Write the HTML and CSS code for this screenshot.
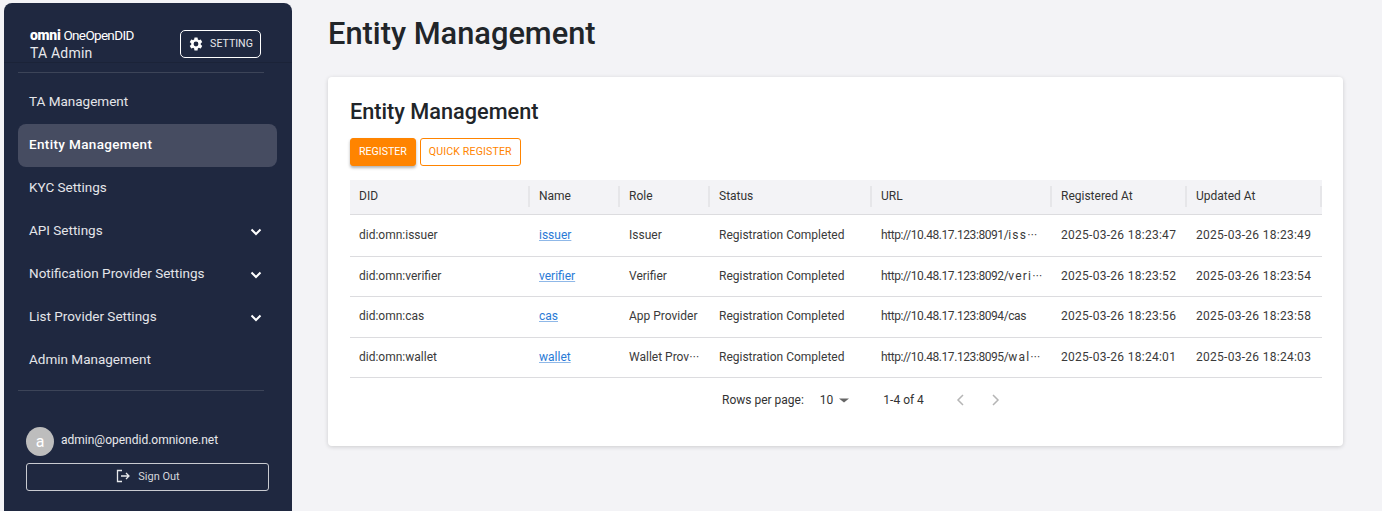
FILE: index.html
```html
<!DOCTYPE html>
<html lang="en">

<head>
  <meta charset="UTF-8" />
  <meta name="viewport" content="width=device-width, initial-scale=1.0" />
  <title>Entity Management</title>
  <link rel="stylesheet" href="styles.css">
</head>

<body>
  <aside class="sidebar">
    <div class="side-header">
      <div class="brand">
        <div class="logo"><span class="logo-omni">omni</span><span class="logo-name">One Open DID</span></div>
        <div class="brand-role">TA Admin</div>
      </div>
      <button class="btn-setting">
        <svg class="gear" viewBox="0 0 24 24" width="16" height="16">
          <path fill="#fff" d="M19.14 12.94c.04-.3.06-.61.06-.94 0-.32-.02-.64-.07-.94l2.03-1.58a.49.49 0 0 0 .12-.61l-1.92-3.32a.49.49 0 0 0-.59-.22l-2.39.96c-.5-.38-1.03-.7-1.62-.94l-.36-2.54a.48.48 0 0 0-.48-.41h-3.84a.48.48 0 0 0-.47.41l-.36 2.54c-.59.24-1.13.57-1.62.94l-2.39-.96a.48.48 0 0 0-.59.22L2.74 8.87a.48.48 0 0 0 .12.61l2.03 1.58c-.05.3-.09.63-.09.94s.02.64.07.94l-2.03 1.58a.49.49 0 0 0-.12.61l1.92 3.32c.12.22.37.29.59.22l2.39-.96c.5.38 1.03.7 1.62.94l.36 2.54c.05.24.24.41.48.41h3.84c.24 0 .44-.17.47-.41l.36-2.54c.59-.24 1.13-.56 1.62-.94l2.39.96c.22.08.47 0 .59-.22l1.92-3.32a.48.48 0 0 0-.12-.61l-2.01-1.58zM12 15.6A3.6 3.6 0 1 1 12 8.4a3.6 3.6 0 0 1 0 7.2z" />
        </svg>
        <span>SETTING</span>
      </button>
    </div>
    <hr class="side-line">

    <nav class="menu">
      <a class="menu-item"><span>TA Management</span></a>
      <a class="menu-item active"><span>Entity Management</span></a>
      <a class="menu-item"><span>KYC Settings</span></a>
      <a class="menu-item"><span>API Settings</span>
        <svg class="chevron" viewBox="0 0 12 8" width="12" height="8"><path d="M1.5 1.5 6 6l4.5-4.5" /></svg>
      </a>
      <a class="menu-item"><span>Notification Provider Settings</span>
        <svg class="chevron" viewBox="0 0 12 8" width="12" height="8"><path d="M1.5 1.5 6 6l4.5-4.5" /></svg>
      </a>
      <a class="menu-item"><span>List Provider Settings</span>
        <svg class="chevron" viewBox="0 0 12 8" width="12" height="8"><path d="M1.5 1.5 6 6l4.5-4.5" /></svg>
      </a>
      <a class="menu-item"><span>Admin Management</span></a>
    </nav>
    <hr class="side-line">

    <div class="user">
      <div class="user-row">
        <span class="avatar">a</span>
        <span class="user-mail">admin@opendid.omnione.net</span>
      </div>
      <button class="btn-signout">
        <svg viewBox="0 0 16 16" width="16" height="16">
          <path class="signout-icon" d="M7 2.5H2.5v11H7M6 8h8M11 5l3 3-3 3" />
        </svg>
        <span>Sign Out</span>
      </button>
    </div>
  </aside>

  <main class="content">
    <h1>Entity Management</h1>

    <section class="card">
      <h2>Entity Management</h2>
      <div class="actions">
        <button class="btn btn-main">REGISTER</button>
        <button class="btn btn-line">QUICK REGISTER</button>
      </div>

      <table id="entidades">
        <colgroup>
          <col class="col-did">
          <col class="col-small">
          <col class="col-small">
          <col class="col-status">
          <col class="col-did">
          <col class="col-date">
          <col class="col-date">
        </colgroup>
        <thead>
          <tr>
            <th><span>DID</span></th>
            <th><span>Name</span></th>
            <th><span>Role</span></th>
            <th><span>Status</span></th>
            <th><span>URL</span></th>
            <th><span>Registered At</span></th>
            <th><span>Updated At</span></th>
          </tr>
        </thead>
        <tbody>
          <tr class="row-tall">
            <td><span>did:omn:issuer</span></td>
            <td><a href="#">issuer</a></td>
            <td><span>Issuer</span></td>
            <td><span>Registration Completed</span></td>
            <td><span class="url">http://10.48.17.123:8091/<span class="url-path">issuer</span></span></td>
            <td><span class="num">2025-03-26 18:23:47</span></td>
            <td><span class="num">2025-03-26 18:23:49</span></td>
          </tr>
          <tr>
            <td><span>did:omn:verifier</span></td>
            <td><a href="#">verifier</a></td>
            <td><span>Verifier</span></td>
            <td><span>Registration Completed</span></td>
            <td><span class="url">http://10.48.17.123:8092/<span class="url-path">verifier</span></span></td>
            <td><span class="num">2025-03-26 18:23:52</span></td>
            <td><span class="num">2025-03-26 18:23:54</span></td>
          </tr>
          <tr>
            <td><span>did:omn:cas</span></td>
            <td><a href="#">cas</a></td>
            <td><span>App Provider</span></td>
            <td><span>Registration Completed</span></td>
            <td><span class="url">http://10.48.17.123:8094/cas</span></td>
            <td><span class="num">2025-03-26 18:23:56</span></td>
            <td><span class="num">2025-03-26 18:23:58</span></td>
          </tr>
          <tr>
            <td><span>did:omn:wallet</span></td>
            <td><a href="#">wallet</a></td>
            <td><span>Wallet Provider</span></td>
            <td><span>Registration Completed</span></td>
            <td><span class="url">http://10.48.17.123:8095/<span class="url-path">wallet</span></span></td>
            <td><span class="num">2025-03-26 18:24:01</span></td>
            <td><span class="num">2025-03-26 18:24:03</span></td>
          </tr>
        </tbody>
      </table>

      <div class="pager">
        <span>Rows per page:</span>
        <span class="pager-size">10 <i class="caret"></i></span>
        <span class="pager-count">1-4 of 4</span>
        <svg class="pager-arrow" viewBox="0 0 10 14" width="10" height="14"><path d="M8 2 3 7l5 5" /></svg>
        <svg class="pager-arrow" viewBox="0 0 10 14" width="10" height="14"><path d="m2 2 5 5-5 5" /></svg>
      </div>
    </section>
  </main>
</body>

</html>
```

FILE: styles.css
```css
* {
  box-sizing: border-box;
}

html,
body {
  height: 511px;
  overflow: hidden;
}

body {
  margin: 0;
  display: flex;
  background-color: #f3f3f6;
  color: #212529;
  font-family: Roboto, "Noto Sans", sans-serif;
  font-size: 12px;
}

/* menu lateral */
.sidebar {
  width: 288px;
  height: 520px;
  margin: 3px 0 0 4px;
  padding: 0 14px;
  flex-shrink: 0;
  background-color: #1f2840;
  border-radius: 8px 8px 0 0;
  color: #fff;
}

.side-header {
  height: 60px;
  margin: 0 -14px;
  padding: 24px 31px 0 26px;
  display: flex;
  justify-content: space-between;
  border-bottom: 1px solid #1b2338;
}

.logo {
  display: flex;
  align-items: baseline;
  height: 17px;
  line-height: 17px;
  white-space: nowrap;
}

.logo-omni {
  font-weight: 900;
  font-size: 14px;
  letter-spacing: -0.3px;
  margin-right: 3px;
}

.logo-name {
  font-size: 13.5px;
  letter-spacing: -0.7px;
  word-spacing: -2.5px;
}

.brand-role {
  font-size: 14px;
  line-height: 19px;
  color: #e8e9ec;
  letter-spacing: 0.2px;
}

.btn-setting {
  width: 81px;
  height: 28px;
  margin-top: 3px;
  padding: 0;
  display: flex;
  align-items: center;
  justify-content: center;
  gap: 6px;
  background: none;
  border: 1px solid #fff;
  border-radius: 5px;
  color: #e8e9ec;
  font-family: inherit;
  font-size: 10.6px;
}

.btn-setting span {
  margin-top: -2px;
}

.side-line {
  width: 246px;
  margin: 9px 0 0;
  border: none;
  border-top: 1px solid #3c4458;
}

.menu {
  margin-top: 7px;
  height: 301px;
  padding-top: 1px;
}

.menu-item {
  height: 43px;
  width: 259px;
  padding: 0 15px 0 11px;
  display: flex;
  align-items: center;
  justify-content: space-between;
  font-size: 13.5px;
  color: #e4e5e9;
  border-radius: 8px;
}

.menu-item span {
  margin-top: -3px;
}

.menu-item.active {
  background-color: #464c61;
  color: #fff;
  font-weight: 500;
  letter-spacing: 0.35px;
}

.chevron path {
  fill: none;
  stroke: #fff;
  stroke-width: 2;
}

.user {
  padding: 36px 9px 0 8px;
}

.user-row {
  display: flex;
  align-items: center;
  gap: 7px;
}

.avatar {
  width: 28px;
  height: 29px;
  display: flex;
  align-items: center;
  justify-content: center;
  background-color: #bdbdbd;
  border-radius: 50%;
  font-size: 16px;
  color: #fff;
}

.user-mail {
  margin-top: -4px;
  font-size: 12px;
  color: #e8e9ec;
}

.btn-signout {
  width: 243px;
  height: 28px;
  margin-top: 7px;
  padding: 0 0 2px;
  display: flex;
  align-items: center;
  justify-content: center;
  gap: 7px;
  background: none;
  border: 1px solid #c9cbd1;
  border-radius: 3px;
  color: #d5d7dc;
  font-family: inherit;
  font-size: 11px;
}

.signout-icon {
  fill: none;
  stroke: #e8e9ec;
  stroke-width: 1.3;
}

/* conteudo */
.content {
  width: 1015px;
  margin-left: 36px;
}

h1 {
  margin: 13px 0 23px;
  height: 41px;
  font-size: 30.8px;
  line-height: 41px;
  font-weight: 500;
}

.card {
  height: 369px;
  padding: 21px 21px 0 22px;
  background-color: #fff;
  border-radius: 4px;
  box-shadow: 0 1px 4px rgba(0, 0, 0, 0.16);
}

h2 {
  margin: 0 0 13px;
  height: 27px;
  font-size: 21.7px;
  line-height: 27px;
  font-weight: 500;
}

.actions {
  display: flex;
  gap: 4px;
  margin-bottom: 14px;
}

.btn {
  height: 28px;
  padding: 0 8px 2px;
  border: 1px solid #ff8400;
  border-radius: 3px;
  font-family: inherit;
  font-size: 10.6px;
}

.btn-main {
  background-color: #ff8400;
  color: #fff;
  box-shadow: 0 2px 3px rgba(0, 0, 0, 0.3);
}

.btn-line {
  letter-spacing: 0.14px;
  background-color: #fff;
  color: #ff8400;
}

table {
  width: 972px;
  border-collapse: collapse;
  table-layout: fixed;
}

.col-did {
  width: 180px;
}

.col-small {
  width: 90px;
}

.col-status {
  width: 162px;
}

.col-date {
  width: 135px;
}

th {
  height: 34px;
  padding: 0;
  background-color: #f3f3f6;
  border-bottom: 1px solid #dcdcdf;
  text-align: left;
  font-weight: 400;
  color: #333;
}

th span {
  display: block;
  height: 21px;
  line-height: 21px;
  padding-left: 9px;
  border-right: 2px solid #e6e6e9;
}

/* o td usa a fonte CJK so para os pontos da reticencia */
td {
  height: 40.5px;
  padding: 0 9px 1px;
  border-bottom: 1px solid #dcdcdf;
  color: #3a3a3a;
  font-family: "Noto Sans CJK KR", sans-serif;
  font-size: 10px;
  line-height: 14px;
  white-space: nowrap;
  overflow: hidden;
  text-overflow: ellipsis;
}

td span,
td a {
  font-family: Roboto, sans-serif;
  font-size: 12px;
}

.num {
  letter-spacing: 0.28px;
}

.url {
  letter-spacing: -0.42px;
}

.url-path {
  letter-spacing: 1.2px;
}

.row-tall td {
  height: 42px;
}

td a {
  color: #2a7ad6;
  text-decoration-color: #8fb8e8;
}

.pager {
  height: 44px;
  display: flex;
  align-items: center;
  padding-left: 372px;
  color: #333;
}

.pager-size {
  margin-left: 16px;
  display: flex;
  align-items: center;
  gap: 6px;
}

.caret {
  border: 5px solid transparent;
  border-top-color: #666;
  border-bottom: none;
  transform: scaleY(0.8);
}

.pager-count {
  margin-left: 34px;
  margin-right: 31px;
}

.pager-arrow {
  margin-right: 26px;
}

.pager-arrow path {
  fill: none;
  stroke: #b5b5b5;
  stroke-width: 1.5;
}
```
